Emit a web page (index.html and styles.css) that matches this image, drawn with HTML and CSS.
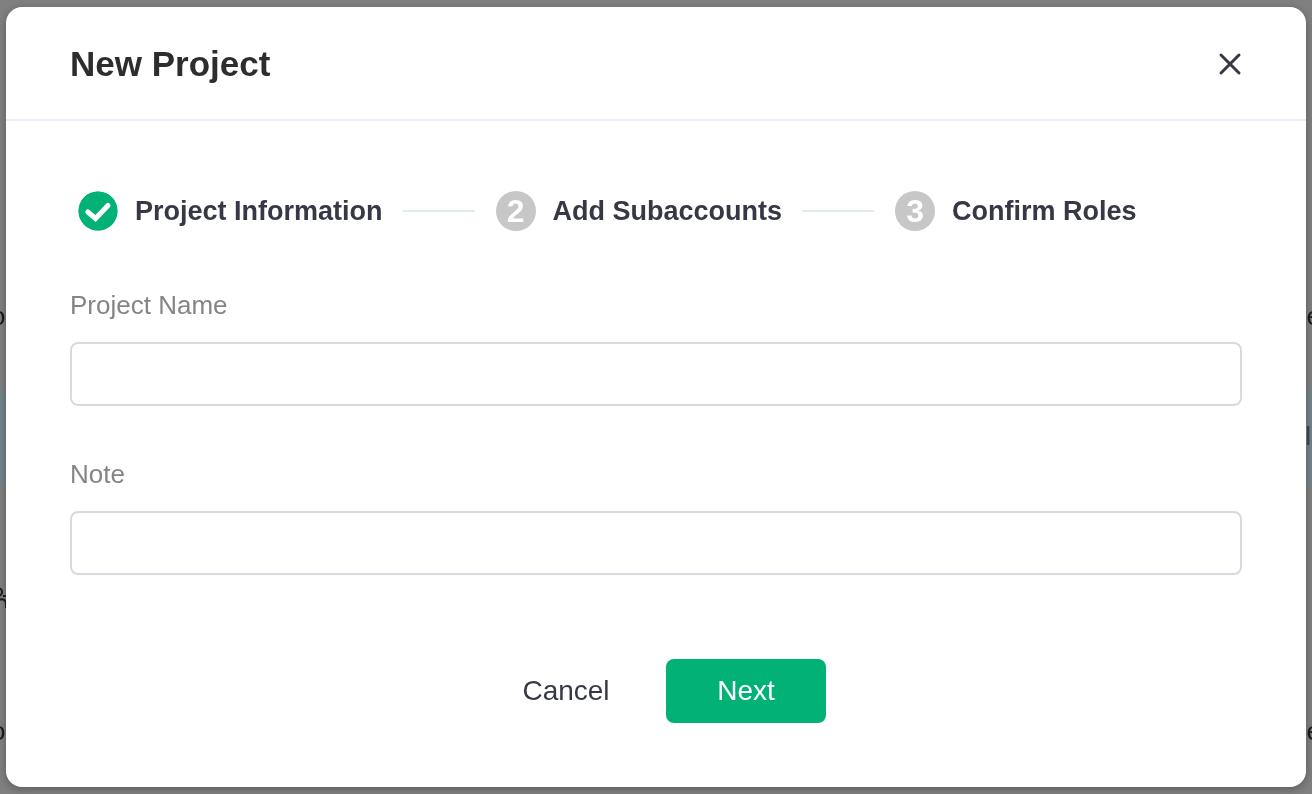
FILE: index.html
```
<!DOCTYPE html>
<html lang="en">

<head>
    <meta charset="utf-8" />
    <meta name="viewport" content="width=device-width, initial-scale=1" />
    <title>New Project</title>
    <link rel="stylesheet" href="styles.css">
</head>

<body>
    <!-- Page behind the dialog -->
    <div class="backdrop" aria-hidden="true">
        <div class="row"></div>
        <div class="row"><span>o</span><span>e</span></div>
        <div class="row selected"><span></span><span>ls</span></div>
        <div class="row">
            <svg class="user" width="15" height="24" viewBox="0 0 15 24" fill="none" stroke="#1c1c1c" stroke-width="2">
                <circle cx="7" cy="6" r="4" />
                <path d="M12 10h3M8 14c5-2 7 1 7 4v4" />
            </svg>
        </div>
        <div class="row"><span>o</span><span>e</span></div>
    </div>

    <!-- Dialog -->
    <div class="modal" role="dialog" aria-labelledby="title">
        <div class="header">
            <h1 id="title">New Project</h1>
            <button class="close" type="button" aria-label="Close">
                <svg width="24" height="24" viewBox="0 0 24 24" fill="none" stroke="#363845" stroke-width="3" stroke-linecap="round">
                    <path d="M3 3l18 18M21 3l-18 18" />
                </svg>
            </button>
        </div>

        <form class="content">
            <ol class="steps">
                <li class="step">
                    <svg class="number" viewBox="0 0 40 40">
                        <circle cx="20" cy="20" r="19.700" fill="#02b175" />
                        <path d="M9.800 21l7.700 6.500L30 14.500" fill="none" stroke="#fff" stroke-width="5" stroke-linecap="round" />
                    </svg>
                    <span>Project Information</span>
                </li>
                <li class="step">
                    <span class="number">2</span>
                    <span>Add Subaccounts</span>
                </li>
                <li class="step">
                    <span class="number">3</span>
                    <span>Confirm Roles</span>
                </li>
            </ol>

            <div class="field">
                <label for="name">Project Name</label>
                <input id="name" type="text" />
            </div>
            <div class="field">
                <label for="note">Note</label>
                <input id="note" type="text" />
            </div>

            <div class="actions">
                <button class="button" type="button">Cancel</button>
                <button class="button primary" type="submit">Next</button>
            </div>
        </form>
    </div>
</body>

</html>
```
FILE: styles.css
```
* {
    box-sizing: border-box;
}

body {
    margin: 0;
    padding: 7px 6px;
    background-color: #808080;
    color: #363845;
    font-family: "Liberation Sans", Arial, sans-serif;
    font-size: 28px;
}

/* page behind */
.backdrop {
    position: fixed;
    inset: 0;
    z-index: -1;
    overflow: hidden;
    display: grid;
    grid-template-rows: 245px 142px 98px 186px 120px;
    color: #1c1c1c;
    font-size: 26px;
}

.row {
    display: flex;
    align-items: center;
    justify-content: space-between;
    margin: 0 -9px;
}

.selected {
    margin: 0 -12px;
    background-color: #748488;
    color: #3e4a4d;
}

.user {
    align-self: flex-end;
    margin-bottom: 61px;
}

.modal {
    background-color: #ffffff;
    border-radius: 16px;
    box-shadow: 0 2px 8px rgba(0, 0, 0, 0.3);
}

.header {
    display: flex;
    align-items: center;
    justify-content: space-between;
    padding: 37px 64px 35px;
    border-bottom: 2px solid #e9edf5;
}

h1 {
    margin: 0;
    color: #2d2d2d;
    font-size: 35px;
    line-height: 40px;
}

.close {
    display: flex;
    padding: 0;
    border: 0;
    background: none;
    cursor: pointer;
}

.content {
    padding: 70px 64px 64px;
}

/* steps */
.steps {
    display: flex;
    gap: 21px;
    margin: 0 0 59px;
    padding: 0 8px;
    list-style: none;
    font-size: 27px;
    font-weight: bold;
    line-height: 40px;
}

.step {
    display: flex;
    align-items: center;
    gap: 17px;
    white-space: nowrap;
}

.step:not(:last-child)::after {
    content: "";
    width: 72px;
    height: 2px;
    margin-left: 3px;
    background-color: #e0ece9;
}

.number {
    width: 40px;
    height: 40px;
    border-radius: 50%;
    text-align: center;
}

span.number {
    background-color: #c7c7c7;
    color: #ffffff;
    font-size: 32px;
}

/* fields */
.field {
    display: flex;
    flex-direction: column;
    gap: 22px;
    margin-bottom: 53px;
}

label {
    color: #858585;
    font-size: 26px;
    line-height: 30px;
}

input {
    width: 100%;
    height: 64px;
    padding: 0 20px;
    border: 2px solid #d8dae1;
    border-radius: 8px;
    background-color: #ffffff;
    color: inherit;
    font: inherit;
}

.actions {
    display: flex;
    justify-content: center;
    gap: 20px;
    margin-top: 84px;
}

.button {
    width: 160px;
    height: 64px;
    border: 0;
    border-radius: 8px;
    background: none;
    color: inherit;
    font: inherit;
    cursor: pointer;
}

.primary {
    background-color: #02b175;
    color: #ffffff;
}
```
